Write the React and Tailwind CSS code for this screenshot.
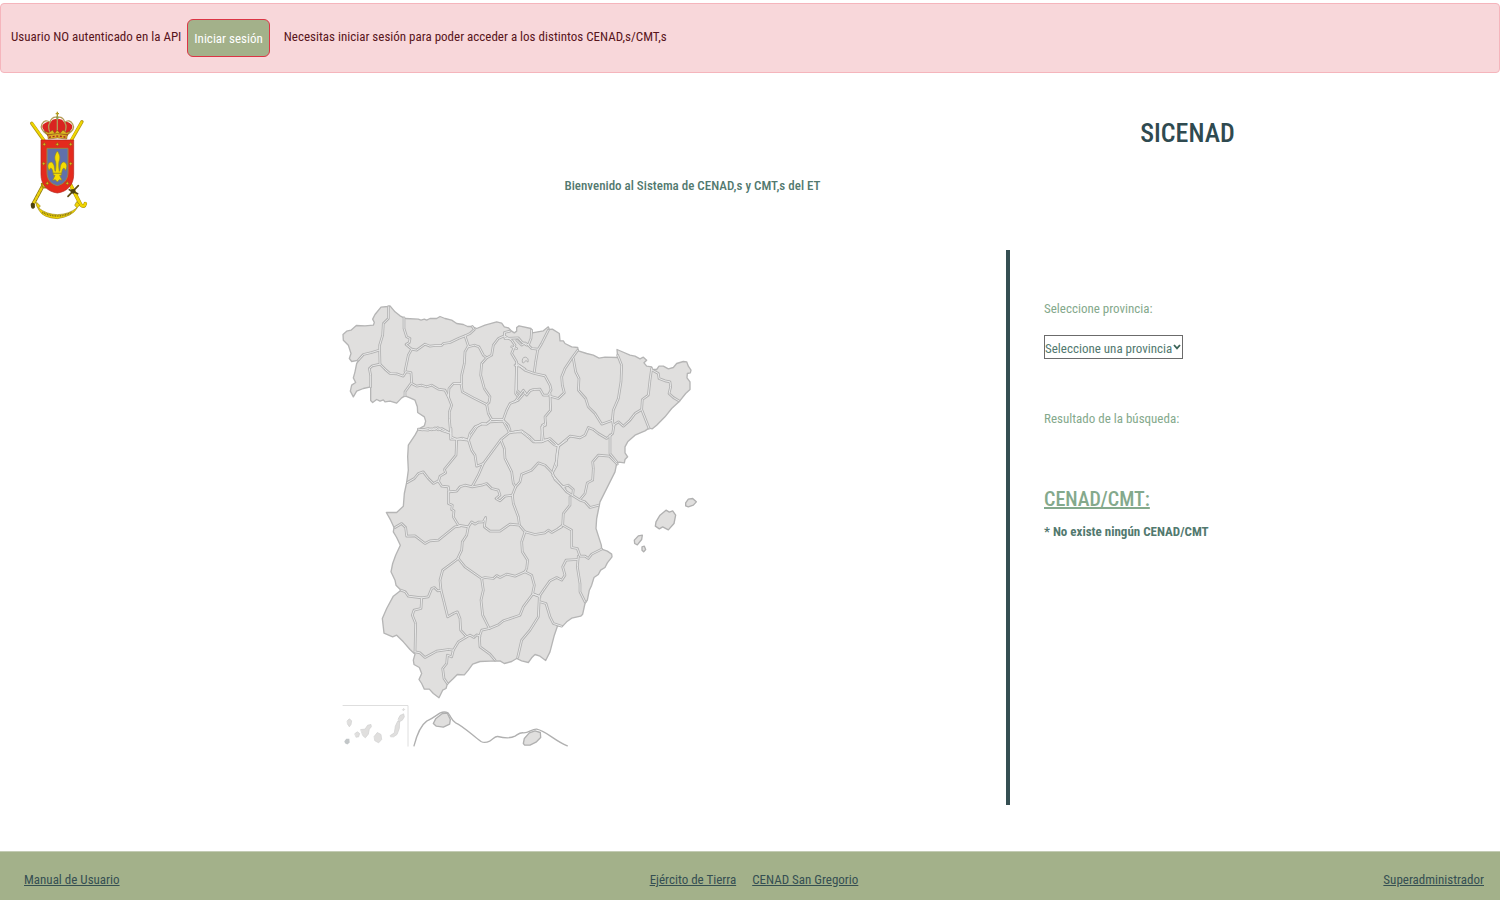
const COAST =
  "24,118 35,108 48,105 64,91 90,92 115,90 118,82 113,72 120,58 138,36 158,34 165,32 180,50 195,62 207,68 212,70 250,72 258,75 268,72 275,75 285,70 305,70 315,64 330,70 350,75 365,85 385,88 398,94 412,94 425,100 450,90 485,80 500,84 508,95 520,98 530,108 538,113 545,108 545,97 552,92 588,100 592,113 625,107 640,95 643,103 652,102 673,115 675,137 685,137 690,145 710,155 728,157 730,167 755,175 775,180 792,189 810,186 848,187 846,163 860,169 885,180 900,183 915,191 925,186 935,195 927,203 935,213 950,215 952,223 965,223 972,213 985,213 1000,221 1015,217 1025,205 1045,199 1055,200 1060,213 1068,225 1066,233 1057,235 1056,248 1065,260 1065,283 1052,295 1032,320 1010,340 990,365 965,390 952,401 942,399 930,407 900,420 878,440 870,455 870,473 878,485 870,493 868,503 852,501 845,505 840,530 825,560 810,590 795,620 791,640 785,670 783,700 791,725 799,750 800,762 817,768 830,777 831,785 817,803 810,817 797,825 790,838 777,847 770,870 763,885 757,915 750,925 743,957 737,963 710,969 695,980 683,993 668,991 658,1020 645,1070 632,1096 615,1083 600,1078 590,1088 580,1102 560,1097 545,1090 530,1099 508,1105 495,1097 465,1098 435,1099 413,1107 400,1125 388,1139 367,1138 355,1150 337,1167 333,1180 323,1185 312,1208 295,1195 283,1182 268,1182 260,1165 252,1153 260,1135 253,1117 237,1108 235,1095 240,1077 225,1063 205,1040 185,1020 173,1025 147,1014 142,970 155,940 175,903 198,885 183,870 180,855 168,830 173,805 182,780 196,750 185,727 175,710 177,697 167,675 154,652 185,652 205,633 208,595 215,562 220,525 218,485 220,450 240,420 250,402 268,392 272,378 268,365 248,352 247,335 240,315 225,308 210,302 200,308 185,324 165,318 150,320 145,314 135,318 125,313 113,322 107,316 107,275 85,280 65,288 55,305 46,288 50,270 62,262 55,248 60,230 65,205 72,195 50,199 43,190 48,175 40,150 25,135";

const BORDERS = [
  {
    at: "translate(0 0)",
    lines: [
      "160,35 160,70 145,85 143,120 134,150 134,170 135,207",
      "70,195 85,178 110,172 132,165",
      "107,275 107,240 103,220 112,212 135,207 150,222 165,235 185,236 205,243 213,230",
      "207,68 207,100 215,125 225,130 223,142 213,148 230,162 220,180 210,228",
      "230,162 245,165 270,147 285,153 300,151 320,151 325,145 345,142 370,130 390,122",
      "412,94 418,103 405,115 390,122 400,152",
      "400,152 390,170 388,205 380,240 380,265",
      "400,155 418,150 432,155 445,180 455,188 470,180 475,150 490,130 508,122",
      "455,188 440,205 437,240 448,280 465,305 462,322 455,328",
      "213,230 228,232 230,262 210,290 210,302",
      "230,265 245,273 260,270 275,275 290,270 310,282 330,285 340,305",
      "340,305 342,280 355,265 378,265 382,290 415,308 455,328",
      "340,305 350,330 343,350 343,370 347,415",
      "250,402 262,404 280,400 290,404 300,398 310,404 320,400 347,415",
      "455,328 460,355 470,373 455,386 440,385 425,395 405,425 400,435 375,432 347,432 347,415",
      "470,373 505,373 515,345 525,325 550,315 570,292",
      "505,375 520,390 525,405",
      "508,122 530,135 540,150 530,175 545,200 542,295 548,303",
      "525,108 508,112 510,130 550,128 560,140 575,150",
      "545,205 570,222",
      "530,155 545,160",
    ],
  },
  {
    at: "translate(540 45)",
    lines: [
      "0,165 15,168 30,180 58,190 90,197 105,225 108,238",
      "5,165 5,240 15,250",
      "0,275 25,240 35,255 45,242 55,238 75,237 85,255 100,255 108,240",
      "50,60 48,85 40,105 30,98 20,105 5,90",
      "100,60 90,80 80,100 68,120 62,155 58,185",
      "40,105 50,115 68,117",
      "188,120 170,145 150,175 140,200 142,225 148,248 130,265 105,258",
      "175,145 182,185 192,205 190,240 212,265 220,290 240,310 260,342 293,330",
      "308,135 320,165 318,215 310,265 295,300 292,330 295,345",
      "410,175 405,210 400,255 382,268 380,298",
      "295,345 310,335 325,348 345,330 360,310 380,298 402,354",
      "412,180 430,190 432,205 450,212 465,215 467,230 462,250 475,262 492,272",
      "297,345 293,370 275,385 250,370 235,358 220,352 210,375 195,383 180,380 165,378 130,408",
      "285,375 285,430 305,455",
      "105,250 107,300 90,320 92,345 80,350 85,390 100,388 118,404 130,408 125,450 115,480",
      "0,365 20,365 45,385 55,395 85,393",
    ],
  },
  {
    at: "translate(120 375)",
    lines: [
      "135,28 160,30 168,26 180,28 188,22 200,31 222,38",
      "228,25 228,50 245,58 262,54 275,58",
      "245,60 243,105 208,148 212,158 195,168 190,185",
      "97,187 118,175 130,160 145,155 160,175 175,190 190,182 200,198 220,200 222,215",
      "222,215 245,213 255,200 270,195 292,200 320,195 335,190 350,205 370,210 375,225 363,235 375,242 390,228 412,225",
      "280,58 285,40 300,20 320,12 335,12 345,5 385,3 400,30 403,38 378,58 325,130 305,138 300,105 290,90 280,58",
      "325,130 310,165 292,198",
      "378,60 388,85 390,115 410,155 415,190 422,200 412,225 415,250 430,290 433,312",
      "403,38 440,32 465,50 480,65 500,65 525,55 550,78",
      "500,60 502,15 512,10",
      "550,78 545,105 545,135 532,158 510,135 490,128 470,150 440,162 435,185 422,200",
      "550,78 575,60",
      "532,158 540,178 570,205",
      "220,215 220,250 232,255 230,268 237,272 235,290 250,315 280,320 290,305 300,312 310,306 325,305 332,292 328,320 345,333 375,333 405,312 433,315 450,335 480,343 510,338 520,330 530,337 560,320",
      "60,322 80,310 92,322 95,348 120,347 150,370 165,362 190,360 240,320 255,318",
      "280,320 275,345 262,365 260,390 248,415",
      "450,335 440,365 442,395 458,420 455,445 450,455",
    ],
  },
  {
    at: "translate(585 465)",
    lines: [
      "85,235 98,225 125,240 125,292 142,295 150,318 165,318 175,325 185,312 215,297",
      "68,75 85,95 110,125 150,150 165,155 180,172 206,165",
      "98,110 115,105 130,118 128,135",
      "120,140 120,165 100,190 98,225",
      "150,148 165,130 172,98 188,90 190,55 188,35 205,15 238,18 262,42",
      "145,318 142,350 150,400 150,425 165,455",
      "142,328 108,330 98,350 105,375 95,390 80,382 60,392 40,420 28,438 10,432",
    ],
  },
  {
    at: "translate(105 765)",
    lines: [
      "265,25 218,60 210,90 213,120 203,122 193,112 185,115 175,140 155,143 115,138 106,125 93,120",
      "155,143 153,175 132,180 127,195 137,220 135,305",
      "213,120 222,155 233,200 250,190 262,185 270,205 272,240 290,260 300,255 312,262 320,254 330,258",
      "265,25 285,50 335,85 340,120 333,150 338,195 358,235",
      "335,85 345,82 370,85 380,76 390,82 410,72 435,78 465,65",
      "465,65 485,75 493,105 488,130 510,140",
      "488,132 460,170 450,195 430,202 400,212 385,224 358,235 335,240 328,260 330,290 360,312 375,330",
      "508,140 505,200 480,240 455,270 443,322",
      "510,155 528,160 540,200 550,220 575,228",
      "135,305 150,308 165,322 200,303 235,298 250,300 265,275 290,260",
      "250,300 245,320 232,315 230,340 218,355 222,385 232,400",
    ],
  },
];

const BALEARES = [
  "408,180 418,186 428,182 437,195 432,220 415,239 398,230 388,236 376,228 378,215 390,195",
  "467,158 475,147 488,145 499,155 490,165 475,170 467,167",
  "313,270 325,257 337,255 335,268 322,284 314,280",
  "336,290 343,288 347,298 341,305 336,300",
];

const CANARIAS = [
  "37,92 43,86 50,92 48,103 43,110 38,102",
  "60,130 67,125 74,130 71,140 64,141",
  "78,118 90,117 98,105 108,103 109,110 103,117 100,132 91,143 84,137",
  "118,138 127,127 138,133 140,148 131,158 120,152",
  "166,136 178,128 181,108 188,93 194,95 193,115 186,133 176,140 168,140",
  "190,86 195,76 206,71 208,80 202,90 193,95",
  "203,58 206,55 209,58 206,61",
];

function SpainMap() {
  return (
    <svg
      viewBox="15 24 1074 1331"
      className="h-[444px] w-[358px] shrink-0"
      role="img"
      aria-label="Mapa de provincias"
      strokeLinejoin="round"
      strokeLinecap="round"
    >
      <polygon points={COAST} fill="#e0dfde" stroke="#b5b5b5" strokeWidth="4" />
      {BORDERS.map((group) => (
        <g key={group.at} transform={group.at} fill="none" stroke="#b2b2b2" strokeWidth="8">
          {group.lines.map((points) => (
            <polyline key={points} points={points} />
          ))}
        </g>
      ))}
      {BORDERS.map((group) => (
        <g key={group.at} transform={group.at} fill="none" stroke="#e8e8e8" strokeWidth="3">
          {group.lines.map((points) => (
            <polyline key={points} points={points} />
          ))}
        </g>
      ))}
      <path d="M562 201Q560 186 571 186Q582 188 579 201L573 196L567 202Z" fill="#e0dfde" stroke="#b2b2b2" strokeWidth="3" />
      <g transform="translate(585 465)" fill="#e0dfde" stroke="#b0b0b0" strokeWidth="4">
        {BALEARES.map((points) => (
          <polygon key={points} points={points} />
        ))}
      </g>
      <g transform="translate(0 1185)">
        <path d="M24 46H219V168" fill="none" stroke="#dedede" strokeWidth="3" />
        <g fill="#e0dfde" stroke="#cfcfcf" strokeWidth="2">
          {CANARIAS.map((points) => (
            <polygon key={points} points={points} />
          ))}
        </g>
        <polygon points="28,153 34,146 43,146 44,157 37,163 30,159" fill="#c2c6c8" />
        <g fill="#e0dfde" stroke="#b0b0b0" strokeWidth="4">
          <path d="M295 100L302 86L322 70L337 69L346 88L344 102L325 111L304 108Z" />
          <path d="M565 160L568 145L583 128L600 122L616 127L617 142L603 156L585 165L569 165Z" />
        </g>
        <path
          d="M237 167C244 140 258 105 275 93C295 84 303 76 316 68Q328 63 339 68C350 82 350 92 362 98C385 108 415 138 438 154Q449 160 464 153C476 146 479 138 488 139C505 143 527 145 540 138C551 131 555 126 566 128C583 128 590 116 605 117C635 123 657 151 697 167"
          fill="none"
          stroke="#b0b0b0"
          strokeWidth="4"
        />
      </g>
    </svg>
  );
}

function Crest() {
  return (
    <svg viewBox="26 18 180 327" className="h-[109px] w-[60px]" role="img" aria-label="Escudo">
      <g fill="none" strokeLinecap="round">
        <path d="M34 55L72 108M185 50L152 108" stroke="#b79b12" strokeWidth="10" />
        <path d="M35 55L73 108M184 51L151 108" stroke="#f0d800" strokeWidth="6" />
        <path d="M70 238L39 296" stroke="#8f7a12" strokeWidth="11" />
        <path d="M70 238L39 296" stroke="#e8cf10" strokeWidth="7" strokeDasharray="8 6" />
        <path d="M64 236Q64 250 77 248" stroke="#a48a10" strokeWidth="5" />
        <path d="M37 299L38 305" stroke="#4e430f" strokeWidth="12" />
        <path d="M150 238L181 299Q192 309 195 296" stroke="#a98f0e" strokeWidth="11" />
        <path d="M150 238L181 299Q192 309 195 296" stroke="#f0d400" strokeWidth="8" />
        <path d="M143 274L174 242M147 254L172 266" stroke="#5c4e14" strokeWidth="5" />
        <circle cx="158" cy="259" r="7" fill="#4e430f" />
      </g>
      <path
        d="M49 292L60 303L55 309Q78 328 111 329Q147 328 170 308L163 301L169 290L178 299L171 308Q157 334 111 341Q68 338 57 317L48 301Z"
        fill="#f1d600"
        stroke="#9d8613"
        strokeWidth="2"
      />
      <path d="M66 322Q110 344 154 322" fill="none" stroke="#84711a" strokeWidth="5" strokeDasharray="3 2" />
      <path d="M62 105H160V208C160 240 141 260 111 264C81 260 62 240 62 208Z" fill="#e42a1d" stroke="#b51f19" strokeWidth="2" />
      <path d="M80 130H143V201C143 224 131 237 111 242C91 237 80 224 80 201Z" fill="#6070ab" stroke="#9a8747" strokeWidth="3" />
      <g fill="#d9b51b" stroke="#8b5c12" strokeWidth="1.5">
        {["72 118", "111 118", "151 118", "70 176", "151 176", "81 235", "141 235"].map((p) => (
          <path key={p} transform={`translate(${p})`} d="M0 -6L2 -2L6 0L2 2L0 6L-2 2L-6 0L-2 -2Z" />
        ))}
      </g>
      <path
        d="M111 138C102 151 102 160 106 170C108 180 106 193 105 199C101 195 105 176 93 171C81 172 80 187 87 197C88 187 96 185 98 205H124C126 185 134 187 135 197C142 187 141 172 129 171C117 176 121 195 117 199C116 193 114 180 116 170C120 160 120 151 111 138Z"
        fill="#f5dc00"
        stroke="#8c842f"
        strokeWidth="2"
      />
      <path
        d="M99 205H123V211H118L125 226L117 224L111 231L105 224L97 226L104 211H99Z"
        fill="#f5dc00"
        stroke="#8c842f"
        strokeWidth="2"
      />
      <path d="M73 79Q61 65 69 58Q79 47 91 51Q98 39 111 43Q124 39 131 51Q144 47 153 58Q161 67 149 79L141 93Q111 84 82 93Z" fill="#d92420" />
      <g fill="none" stroke="#b49a55" strokeWidth="4">
        <path d="M80 88Q57 73 65 57Q75 41 89 52Q80 66 90 84M142 88Q166 73 157 57Q147 41 133 52Q142 66 132 84" />
        <path d="M89 52Q94 34 111 37Q129 34 133 52M111 37V84" />
      </g>
      <path d="M80 88L72 78L85 83L97 75L103 85L111 75L119 85L128 75L138 83L150 78L142 88Z" fill="#dbb721" stroke="#7f4d1d" strokeWidth="1.5" />
      <path d="M82 90Q111 81 141 90L139 102Q111 96 84 102Z" fill="#dcae23" stroke="#8d5b1d" strokeWidth="2" />
      <path d="M86 97Q111 90 137 97" fill="none" stroke="#a62422" strokeWidth="4" strokeDasharray="6 5" />
      <path d="M111 20V38M106 26H116" stroke="#b39a1d" strokeWidth="4" />
      <circle cx="111" cy="38" r="4" fill="#8a9a55" />
    </svg>
  );
}

export default function App() {
  return (
    <div className="flex min-h-screen flex-col bg-white pt-[3px] font-['Roboto_Condensed','Roboto','Noto_Sans',sans-serif] text-[13px] leading-6 text-[#52796f]">
      <div role="alert" className="flex items-start rounded border border-[#f5b5bc] bg-[#f8d7da] px-[10px] py-[15px] text-[#58151c]">
        <span className="py-[6px]">Usuario NO autenticado en la API</span>
        <button type="button" className="mx-[6px] h-[38px] rounded-md border border-[#dc3545] bg-[#a3b18a] px-[6px] pt-px text-white">
          Iniciar sesión
        </button>
        <span className="py-[6px] pl-2">Necesitas iniciar sesión para poder acceder a los distintos CENAD,s/CMT,s</span>
      </div>

      <header className="grid h-[177px] grid-cols-[385fr_615fr_375fr_125fr]">
        <div className="pt-[38px] pl-[29px]">
          <Crest />
        </div>
        <p className="pt-[101px] text-center font-medium">Bienvenido al Sistema de CENAD,s y CMT,s del ET</p>
        <h1 className="pt-10 text-center text-[26px] leading-10 font-medium text-[#2f4a50]">SICENAD</h1>
      </header>

      <main className="grid min-h-[555px] grid-cols-[1006fr_494fr]">
        <section className="flex items-start justify-center pt-[53px] pl-8">
          <SpainMap />
        </section>
        <section className="border-l-4 border-[#354f52] pt-[47px] pl-[34px]">
          <label htmlFor="provincia" className="block text-[#84a98c]">
            Seleccione provincia:
          </label>
          <div className="relative mt-[14px] w-[139px]">
            <select
              id="provincia"
              className="block h-6 w-full appearance-none border border-[#6b6b6b] bg-white pt-px text-[#52796f]"
            >
              <option>Seleccione una provincia</option>
            </select>
            <svg viewBox="0 0 8 6" className="pointer-events-none absolute top-[9px] right-[2px] h-[6px] w-2">
              <path d="M1 1L4 4.4L7 1" fill="none" stroke="#3b6357" strokeWidth="1.8" />
            </svg>
          </div>
          <p className="mt-12 text-[#84a98c]">Resultado de la búsqueda:</p>
          <h2 className="mt-[52px] text-[20px] leading-8 font-medium text-[#84a98c] underline">CENAD/CMT:</h2>
          <p className="mt-[5px] font-bold">* No existe ningún CENAD/CMT</p>
        </section>
      </main>

      <footer className="mt-auto grid h-[49px] grid-cols-3 items-center border-t border-[#c3ccb4] bg-[#a3b18a] pt-2 pr-4 pl-6 text-[#354f52]">
        <a href="#manual" className="justify-self-start underline">
          Manual de Usuario
        </a>
        <nav className="flex justify-center gap-4">
          <a href="#ejercito" className="underline">
            Ejército de Tierra
          </a>
          <a href="#san-gregorio" className="underline">
            CENAD San Gregorio
          </a>
        </nav>
        <a href="#superadministrador" className="justify-self-end underline">
          Superadministrador
        </a>
      </footer>
    </div>
  );
}
